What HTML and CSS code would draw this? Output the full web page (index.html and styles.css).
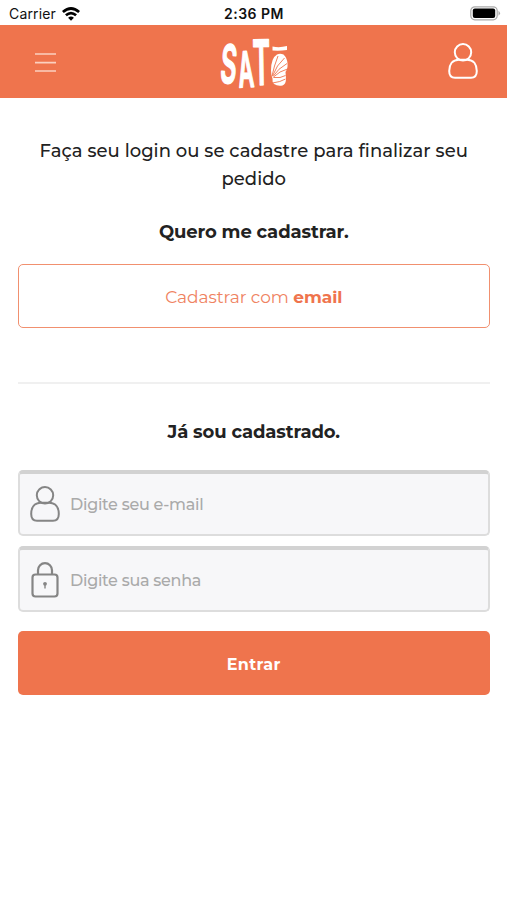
FILE: index.html
```html
<!DOCTYPE html>
<html lang="pt-BR">
<head>
<meta charset="utf-8">
<title>Login</title>
<link rel="stylesheet" href="styles.css">
</head>
<body>
<div class="status">
  <div class="carrier"><span>Carrier</span>
    <svg width="18" height="14" viewBox="0 0 18 14" fill="none" stroke="#000" stroke-width="2.7"><path d="M.9 5.1Q9-2.1 17.1 5.1M3.9 8.3q5.1-4.5 10.2 0"/><path d="M6.1 10.7Q9 8.3 11.9 10.7L9 13.7Z" fill="#000" stroke="none"/></svg>
  </div>
  <time>2:36 PM</time>
  <svg class="battery" width="31" height="15" viewBox="0 0 31 15"><rect x=".8" y=".8" width="26.4" height="13" rx="4" fill="#fff" stroke="#aaa" stroke-width="1.2"/><rect x="2.8" y="2.6" width="22.4" height="9.4" rx="2" fill="#000"/><path d="M28.5 4.8q3 2.5 0 5Z" fill="#aaa"/></svg>
</div>
<header class="header">
  <button class="menu" aria-label="Menu"><svg width="21" height="21" viewBox="0 0 21 21" stroke="#fbd0c0" stroke-width="1.6"><path d="M0 2h21M0 10.6h21M0 19h21"/></svg></button>
  <svg class="logo" width="70" height="73" viewBox="0 -12 70 73" fill="#fff">
    <g class="lettering" stroke="#fff" stroke-width="1.6" stroke-linejoin="round">
      <text transform="translate(.5 45.5) rotate(4) scale(.47 1)" font-size="53">S</text>
      <text transform="translate(20 50.5) rotate(-3) scale(.44 1)" font-size="49">A</text>
      <text transform="translate(34 48) rotate(-1) scale(.43 1)" font-size="62">T</text>
    </g>
    <path d="M53.500 9.500q7 1.500 14.500-.5v4q-7 1-14.500.5Z"/>
    <path d="M58 17.500q3-1.500 6.500 0 3.500 3 4 9 .5 5-2 8.500l.5 7q0 5-3.500 6.500-5 1-8.500-1.500-2-2-1.500-5.500-1.500-3-1.500-8 0-12.500 6-16Z"/>
    <path d="M53 39q2-10 6-20M53.500 39q4-11 12-18M54 39.500q5-8 14-13M54.500 40q6-6 14-8M54.500 40.500q7 1 12-2M53.500 46q8-1 13-4" fill="none" stroke="#ef744d" stroke-width=".9"/>
  </svg>
  <button class="account" aria-label="Conta"><svg width="30" height="36" viewBox="0 0 30 36" fill="none" stroke="#fff" stroke-width="2"><circle cx="15" cy="9.300" r="8.200"/><path d="M11 16.800C4 16.800 1.200 22 1.200 28 1.200 33 3 34.800 7 34.800H23C27 34.800 28.800 33 28.800 28 28.800 22 26 16.800 19 16.800Z"/></svg></button>
</header>
<main class="content">
  <p class="intro"><span>Faça seu login ou se cadastre para finalizar seu</span> <span>pedido</span></p>
  <h2 class="title join">Quero me cadastrar.</h2>
  <button class="outline"><span>Cadastrar com <b>email</b></span></button>
  <hr>
  <h2 class="title member">Já sou cadastrado.</h2>
  <form>
    <label class="field"><svg width="30" height="36" viewBox="0 0 30 36" fill="none" stroke="#858585" stroke-width="2"><circle cx="15" cy="9.300" r="8.200"/><path d="M11 16.800C4 16.800 1.200 22 1.200 28 1.200 33 3 34.800 7 34.800H23C27 34.800 28.800 33 28.800 28 28.800 22 26 16.800 19 16.800Z"/></svg><input type="text" placeholder="Digite seu e-mail"></label>
    <label class="field"><svg width="30" height="36" viewBox="0 0 30 36" fill="none" stroke="#858585" stroke-width="2.200"><rect x="2.500" y="12.500" width="25" height="22" rx="3"/><path d="M8 12V8.200a7 7 0 0 1 14 0V12"/><path d="M15 21.500v5" stroke-width="1.400"/><circle cx="15" cy="21.800" r="1.900" fill="#858585" stroke="none"/></svg><input type="password" placeholder="Digite sua senha"></label>
    <button class="submit" type="button">Entrar</button>
  </form>
</main>
</body>
</html>
```

FILE: styles.css
```css
* { box-sizing: border-box; }
body { margin: 0; background: #fff; color: #222; font-family: Montserrat, Inter, sans-serif; }
button { padding: 0; border: 0; background: none; font: inherit; }
svg { display: block; flex: none; }
.status { height: 25px; display: grid; grid-template-columns: 1fr auto 1fr; align-items: center; padding: 2px 6px 0 9px; font: 14px Inter, sans-serif; color: #111; }
.carrier { display: flex; align-items: center; gap: 6px; letter-spacing: .15px; }
.status time { margin-right: 2px; font-weight: 600; letter-spacing: .5px; }
.battery { justify-self: end; }
.header { height: 73px; display: grid; grid-template-columns: 1fr auto 1fr; align-items: center; padding: 0 29px 0 35px; background: #ef744d; }
.menu { justify-self: start; margin-top: 2px; }
.account { justify-self: end; margin-bottom: 2px; }
.logo { margin-right: 5px; overflow: visible; }
.lettering { font-family: Inter, sans-serif; font-weight: 600; }
.content { padding: 39px 17.500px 0 18px; }
.intro { margin: 0; text-align: center; font-size: 18px; line-height: 28px; font-weight: 500; letter-spacing: .03px; }
.intro span { white-space: nowrap; }
.title { margin: 0; text-align: center; font-size: 18px; line-height: 28px; font-weight: 700; letter-spacing: -.12px; }
.join { margin-top: 25px; }
.outline { display: block; width: 100%; height: 64px; margin-top: 18px; border: 1.500px solid #f1906f; border-radius: 5px; color: #ef8261; font-size: 17px; letter-spacing: -.05px; }
.outline span { position: relative; top: 1px; }
.outline b { font-weight: 700; color: #ef744d; }
hr { height: 2px; margin: 54px 0 34px; border: 0; background: #f0f0f0; }
.field { height: 66px; display: flex; align-items: center; gap: 10px; margin-bottom: 10px; padding: 0 10px 1px; border: 2px solid #ddd; border-top: 4px solid #d2d2d2; border-radius: 5px; background: #f7f7f9; }
.member + form { margin-top: 24px; }
.field input { flex: 1; min-width: 0; padding: 2px 0 0; border: 0; outline: 0; background: none; font: 500 16px Montserrat, Inter, sans-serif; letter-spacing: -.27px; }
.field input::placeholder { color: #aaa; opacity: 1; }
.submit { display: block; width: 100%; height: 64px; margin-top: 19px; padding-top: 2px; border-radius: 5px; background: #ef744d; color: #fff; font-size: 16px; font-weight: 700; letter-spacing: .4px; }
```
